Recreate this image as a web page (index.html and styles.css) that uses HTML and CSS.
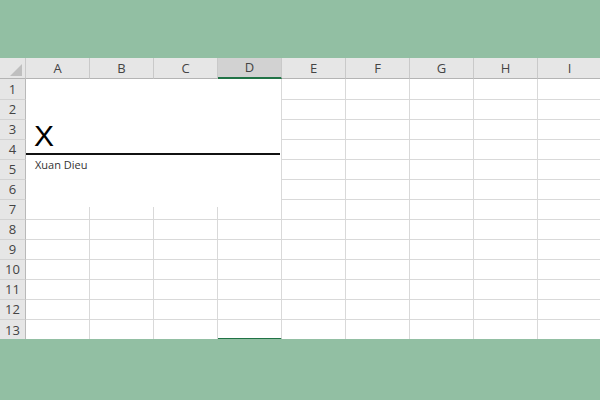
FILE: index.html
```html
<!DOCTYPE html>
<html>
<head>
<meta charset="utf-8">
<link rel="stylesheet" href="styles.css">
</head>
<body>
<div class="frame">
  <div class="sheet">
    <div class="row head">
      <div class="rh corner"><svg width="25" height="20" viewBox="0 0 25 20"><polygon points="22,6 22,18 10,18" fill="#bfbfbf"/></svg></div>
      <div class="c">A</div><div class="c">B</div><div class="c">C</div><div class="c sel">D</div><div class="c">E</div><div class="c">F</div><div class="c">G</div><div class="c">H</div><div class="c">I</div>
    </div>
    <div class="row first"><div class="rh">1</div><div class="c"></div><div class="c"></div><div class="c"></div><div class="c"></div><div class="c"></div><div class="c"></div><div class="c"></div><div class="c"></div><div class="c"></div></div>
    <div class="row"><div class="rh">2</div><div class="c"></div><div class="c"></div><div class="c"></div><div class="c"></div><div class="c"></div><div class="c"></div><div class="c"></div><div class="c"></div><div class="c"></div></div>
    <div class="row"><div class="rh">3</div><div class="c"></div><div class="c"></div><div class="c"></div><div class="c"></div><div class="c"></div><div class="c"></div><div class="c"></div><div class="c"></div><div class="c"></div></div>
    <div class="row"><div class="rh">4</div><div class="c"></div><div class="c"></div><div class="c"></div><div class="c"></div><div class="c"></div><div class="c"></div><div class="c"></div><div class="c"></div><div class="c"></div></div>
    <div class="row"><div class="rh">5</div><div class="c"></div><div class="c"></div><div class="c"></div><div class="c"></div><div class="c"></div><div class="c"></div><div class="c"></div><div class="c"></div><div class="c"></div></div>
    <div class="row"><div class="rh">6</div><div class="c"></div><div class="c"></div><div class="c"></div><div class="c"></div><div class="c"></div><div class="c"></div><div class="c"></div><div class="c"></div><div class="c"></div></div>
    <div class="row"><div class="rh">7</div><div class="c"></div><div class="c"></div><div class="c"></div><div class="c"></div><div class="c"></div><div class="c"></div><div class="c"></div><div class="c"></div><div class="c"></div></div>
    <div class="row"><div class="rh">8</div><div class="c"></div><div class="c"></div><div class="c"></div><div class="c"></div><div class="c"></div><div class="c"></div><div class="c"></div><div class="c"></div><div class="c"></div></div>
    <div class="row"><div class="rh">9</div><div class="c"></div><div class="c"></div><div class="c"></div><div class="c"></div><div class="c"></div><div class="c"></div><div class="c"></div><div class="c"></div><div class="c"></div></div>
    <div class="row"><div class="rh">10</div><div class="c"></div><div class="c"></div><div class="c"></div><div class="c"></div><div class="c"></div><div class="c"></div><div class="c"></div><div class="c"></div><div class="c"></div></div>
    <div class="row"><div class="rh">11</div><div class="c"></div><div class="c"></div><div class="c"></div><div class="c"></div><div class="c"></div><div class="c"></div><div class="c"></div><div class="c"></div><div class="c"></div></div>
    <div class="row"><div class="rh">12</div><div class="c"></div><div class="c"></div><div class="c"></div><div class="c"></div><div class="c"></div><div class="c"></div><div class="c"></div><div class="c"></div><div class="c"></div></div>
    <div class="row last"><div class="rh">13</div><div class="c"></div><div class="c"></div><div class="c"></div><div class="c selbot"></div><div class="c"></div><div class="c"></div><div class="c"></div><div class="c"></div><div class="c"></div></div>

    <div class="box">
      <div class="big">X</div>
      <div class="rule"></div>
      <div class="name">Xuan Dieu</div>
    </div>
  </div>
</div>
</body>
</html>
```

FILE: styles.css
```css
html, body {
  margin: 0;
  padding: 0;
  background: #92bfa3;
  width: 600px;
  height: 400px;
  overflow: hidden;
}
.frame {
  padding-top: 58px;
}
.sheet {
  position: relative;
  width: 600px;
  height: 281px;
  overflow: hidden;
  background: #ffffff;
  font-family: "Open Sans", "Noto Sans", sans-serif;
}
.row {
  display: flex;
  height: 20px;
}
.row.head {
  height: 21px;
}
.row.first {
  height: 21px;
}
.rh {
  flex: 0 0 26px;
  box-sizing: border-box;
  background: #e6e6e6;
  border-right: 1px solid #b9b9b9;
  border-bottom: 1px solid #d2d2d2;
  color: #444;
  font-size: 13px;
  line-height: 19px;
  text-align: center;
}
.row.first .rh {
  line-height: 20px;
}
.c {
  flex: 0 0 64px;
  box-sizing: border-box;
  border-right: 1px solid #d9d9d9;
  border-bottom: 1px solid #d9d9d9;
}
.row.last .c {
  border-bottom: none;
}
.row.last .rh {
  border-bottom: none;
  line-height: 20px;
}
.head .rh,
.head .c {
  background: #e6e6e6;
  border-right: 1px solid #c9c9c9;
  border-bottom: 1px solid #b4b4b4;
  color: #444;
  font-size: 13px;
  line-height: 20px;
  text-align: center;
}
.head .corner {
  padding: 0;
  line-height: 0;
}
.head .c.sel {
  background: #d2d2d2;
  border-bottom: 2px solid #217346;
  line-height: 19px;
}
.row.last .c.selbot {
  border-bottom: 2px solid #217346;
}
.box {
  position: absolute;
  left: 26px;
  top: 21px;
  width: 255px;
  height: 128px;
  background: #ffffff;
  display: flex;
  flex-direction: column;
}
.big {
  margin-top: 42px;
  padding-left: 8px;
  font-family: "Liberation Sans", Arial, sans-serif;
  font-size: 30px;
  line-height: 30px;
  color: #000;
}
.rule {
  margin-top: 2px;
  height: 2px;
  background: #111;
  width: 254px;
}
.name {
  margin-top: 3px;
  padding-left: 9px;
  font-size: 11px;
  line-height: 14px;
  color: #333;
}
```
